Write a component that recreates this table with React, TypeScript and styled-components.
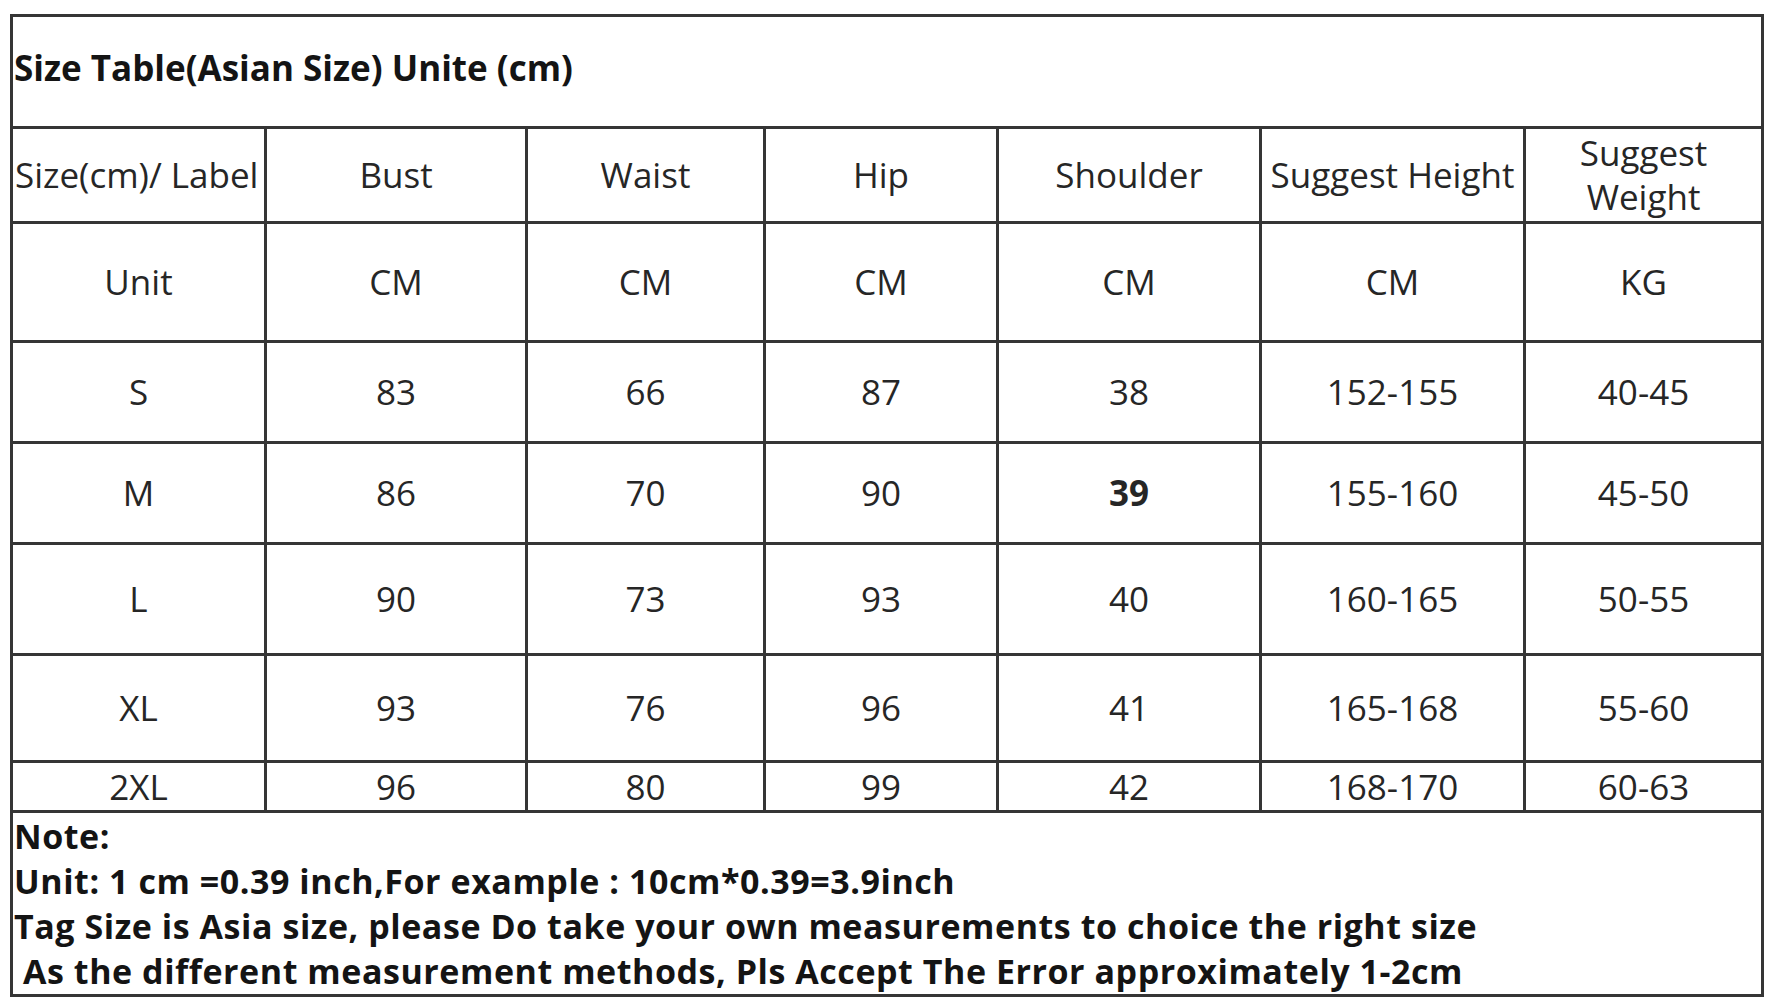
import React from "react";
import styled, { createGlobalStyle } from "styled-components";

const GlobalStyle = createGlobalStyle`
  html, body {
    margin: 0;
    padding: 0;
    background: #ffffff;
  }

  body {
    font-family: "Open Sans", "Liberation Sans", sans-serif;
    color: #222;
  }
`;

const Page = styled.div`
  padding: 14px 0 0 10px;
  height: 1000px;
  box-sizing: border-box;
  overflow: hidden;
`;

const SizeTable = styled.table`
  border-collapse: collapse;
  table-layout: fixed;
  width: 1754px;
  font-size: 35px;
  line-height: 44px;
  color: #262626;

  td {
    border: 3px solid #353535;
    padding: 0;
    text-align: center;
    vertical-align: middle;
    overflow: hidden;
  }
`;

const Row = styled.tr<{ $h: number }>`
  height: ${(p) => p.$h}px;
`;

const TitleCell = styled.td`
  && {
    text-align: left;
    font-weight: 700;
    font-size: 35px;
    color: #141414;
    padding: 0 0 8px 1px;
  }
`;

const HeadCell = styled.td<{ $left?: boolean }>`
  && {
    white-space: nowrap;
    text-align: ${(p) => (p.$left ? "left" : "center")};
    padding-left: ${(p) => (p.$left ? "2px" : "0")};
  }
`;

const WrapCell = styled.td`
  && {
    white-space: normal;
    padding: 0 40px;
    line-height: 44px;
  }
`;

const ValueCell = styled.td<{ $bold?: boolean }>`
  font-weight: ${(p) => (p.$bold ? 700 : 400)};
`;

const NoteCell = styled.td`
  && {
    text-align: left;
    vertical-align: top;
    font-weight: 700;
    font-size: 34px;
    letter-spacing: 0.55px;
    color: #141414;
    line-height: 45px;
    padding: 1px 0 0 1px;
  }
`;

const NoteLine = styled.div<{ $indent?: boolean }>`
  white-space: nowrap;
  padding-left: ${(p) => (p.$indent ? "9px" : "0")};
`;

const widths = [254, 261, 238, 233, 263, 264, 238];

const rows: { label: string; values: string[]; h: number; bold?: number }[] = [
  { label: "Unit", values: ["CM", "CM", "CM", "CM", "CM", "KG"], h: 119 },
  { label: "S", values: ["83", "66", "87", "38", "152-155", "40-45"], h: 101 },
  { label: "M", values: ["86", "70", "90", "39", "155-160", "45-50"], h: 101, bold: 3 },
  { label: "L", values: ["90", "73", "93", "40", "160-165", "50-55"], h: 111 },
  { label: "XL", values: ["93", "76", "96", "41", "165-168", "55-60"], h: 107 },
  { label: "2XL", values: ["96", "80", "99", "42", "168-170", "60-63"], h: 50 },
];

export default function App() {
  return (
    <>
      <GlobalStyle />
      <Page>
        <SizeTable>
          <colgroup>
            {widths.map((w, i) => (
              <col key={i} style={{ width: w }} />
            ))}
          </colgroup>
          <tbody>
            <Row $h={112}>
              <TitleCell colSpan={7}>Size Table(Asian Size) Unite (cm)</TitleCell>
            </Row>
            <Row $h={95}>
              <HeadCell $left>Size(cm)/ Label</HeadCell>
              <HeadCell>Bust</HeadCell>
              <HeadCell>Waist</HeadCell>
              <HeadCell>Hip</HeadCell>
              <HeadCell>Shoulder</HeadCell>
              <HeadCell>Suggest Height</HeadCell>
              <WrapCell>Suggest Weight</WrapCell>
            </Row>
            {rows.map((r) => (
              <Row key={r.label} $h={r.h}>
                <ValueCell>{r.label}</ValueCell>
                {r.values.map((v, i) => (
                  <ValueCell key={i} $bold={r.bold === i}>
                    {v}
                  </ValueCell>
                ))}
              </Row>
            ))}
            <Row $h={184}>
              <NoteCell colSpan={7}>
                <NoteLine>Note:</NoteLine>
                <NoteLine>Unit: 1 cm =0.39 inch,For example : 10cm*0.39=3.9inch</NoteLine>
                <NoteLine>Tag Size is Asia size, please Do take your own measurements to choice the right size</NoteLine>
                <NoteLine $indent>As the different measurement methods, Pls Accept The Error approximately 1-2cm</NoteLine>
              </NoteCell>
            </Row>
          </tbody>
        </SizeTable>
      </Page>
    </>
  );
}
